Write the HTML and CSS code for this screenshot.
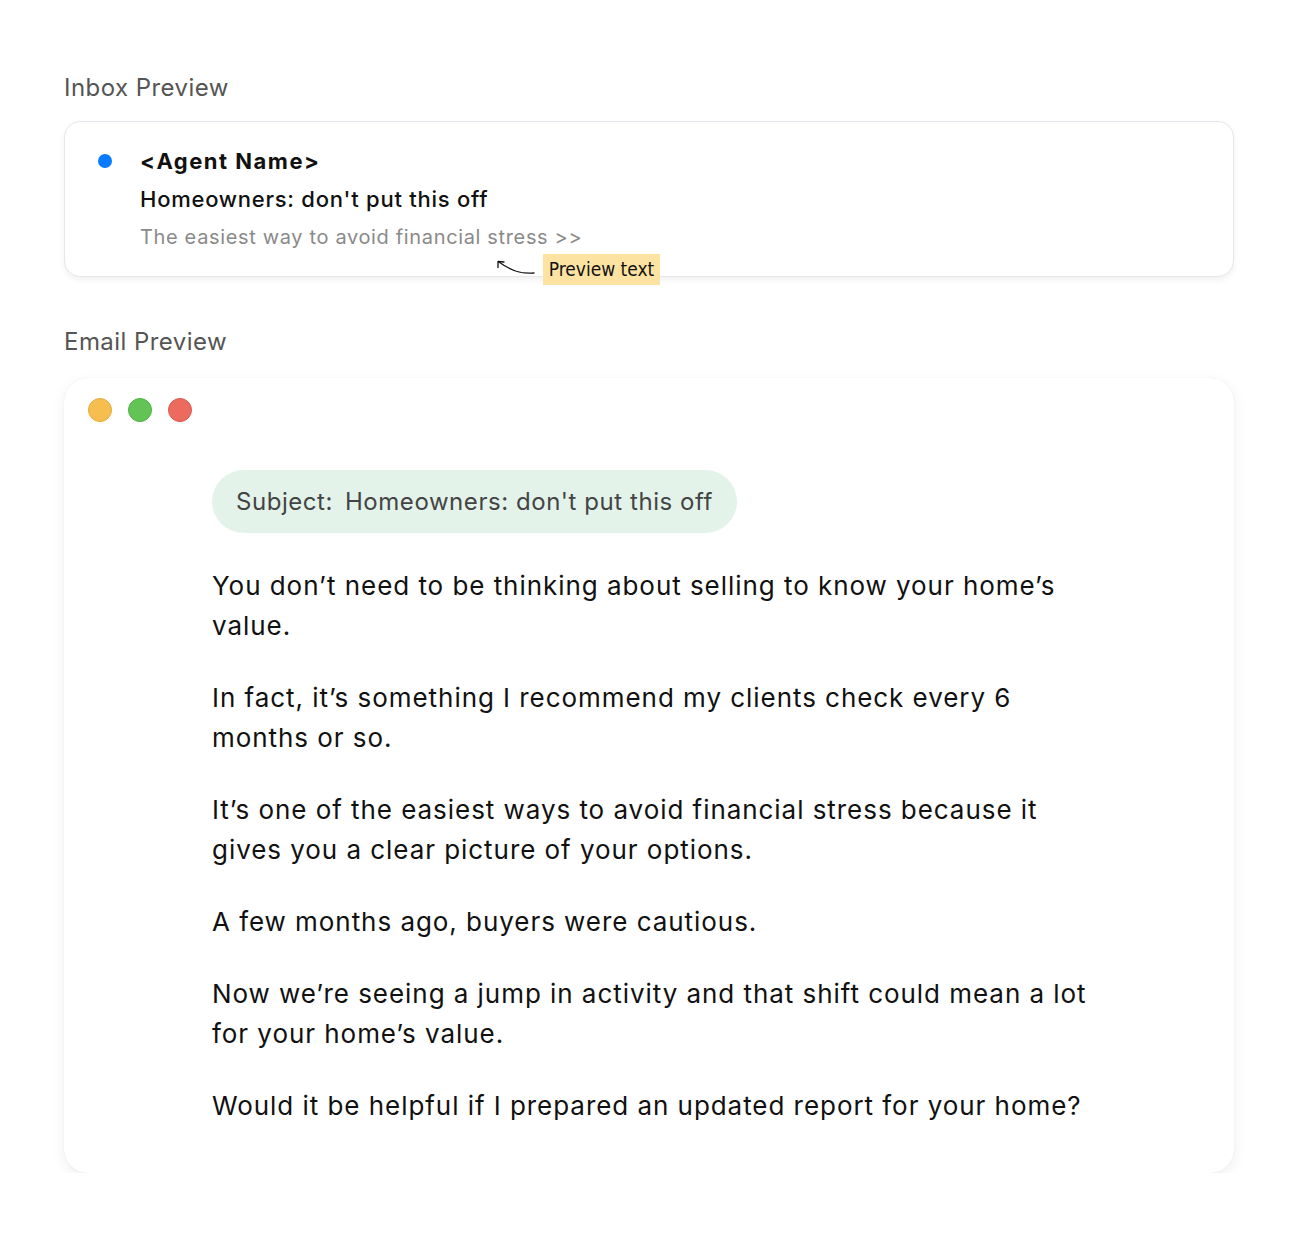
FILE: index.html
```html
<!DOCTYPE html>
<html>
<head>
<meta charset="utf-8">
<link rel="stylesheet" href="styles.css">
</head>
<body>
<div class="page">
  <div class="label">Inbox Preview</div>
  <div class="inbox-card">
    <div class="unread-dot"></div>
    <div class="inbox-text">
      <div class="sender">&lt;Agent Name&gt;</div>
      <div class="subject-line">Homeowners: don't put this off</div>
      <div class="preview-line">The easiest way to avoid financial stress &gt;&gt;</div>
    </div>
    <svg class="annot-arrow" width="50" height="22" viewBox="0 0 50 22">
      <path d="M47 17 C34 18 24 15 12 6" fill="none" stroke="#111" stroke-width="1.3" stroke-linecap="round"/>
      <path d="M11 11.5 L11 5.5 L17 6" fill="none" stroke="#111" stroke-width="1.3" stroke-linecap="round" stroke-linejoin="round"/>
    </svg>
    <div class="annot-tag">Preview text</div>
  </div>

  <div class="label label-email">Email Preview</div>
  <div class="email-card">
    <div class="window-dots">
      <span class="wdot yellow"></span>
      <span class="wdot green"></span>
      <span class="wdot red"></span>
    </div>
    <div class="email-body">
      <div class="subject-pill"><span class="subject-key">Subject:</span>Homeowners: don't put this off</div>
      <p>You don’t need to be thinking about selling to know your home’s value.</p>
      <p>In fact, it’s something I recommend my clients check every 6 months or so.</p>
      <p>It’s one of the easiest ways to avoid financial stress because it gives you a clear picture of your options.</p>
      <p>A few months ago, buyers were cautious.</p>
      <p>Now we’re seeing a jump in activity and that shift could mean a lot for your home’s value.</p>
      <p>Would it be helpful if I prepared an updated report for your home?</p>
    </div>
  </div>
</div>
</body>
</html>
```

FILE: styles.css
```css
* { box-sizing: border-box; }
body {
  margin: 0;
  background: #ffffff;
  font-family: Inter, "Noto Sans", sans-serif;
  color: #111;
}
.page {
  padding: 72px 64px 0 64px;
}
.label {
  font-size: 24px;
  line-height: 32px;
  letter-spacing: 0.45px;
  color: #555;
  margin-bottom: 17px;
}
.label-email {
  margin-top: 49px;
  margin-bottom: 20px;
}
.inbox-card {
  position: relative;
  display: flex;
  align-items: flex-start;
  gap: 28px;
  height: 156px;
  padding: 20px 0 20px 33px;
  border: 1px solid #e6e6ec;
  border-radius: 16px;
  background: #fff;
  box-shadow: 0 3px 6px rgba(0,0,0,0.06);
}
.unread-dot {
  width: 14px;
  height: 14px;
  border-radius: 50%;
  background: #0a7aff;
  margin-top: 12px;
  flex: none;
}
.inbox-text {
  display: flex;
  flex-direction: column;
}
.sender {
  font-size: 22px;
  line-height: 38px;
  font-weight: 650;
  letter-spacing: 1.5px;
  color: #111;
}
.subject-line {
  font-size: 22px;
  line-height: 38px;
  font-weight: 500;
  letter-spacing: 0.75px;
  color: #111;
}
.preview-line {
  font-size: 20px;
  line-height: 38px;
  letter-spacing: 0.65px;
  color: #8a8a8a;
}
.annot-arrow {
  position: absolute;
  left: 422px;
  top: 134px;
}
.annot-tag {
  position: absolute;
  left: 478px;
  top: 132px;
  width: 117px;
  height: 31px;
  background: #fde3a1;
  font-family: "Liberation Sans Narrow", "DejaVu Sans Condensed", sans-serif;
  font-size: 19px;
  line-height: 31px;
  text-align: center;
  color: #111;
}
.email-card {
  height: 795px;
  padding: 20px 24px 47px 24px;
  border-radius: 24px;
  background: #fff;
  box-shadow: 0 0 1px rgba(0,0,0,0.10), 0 4px 14px rgba(0,0,0,0.07);
}
.window-dots {
  display: flex;
  gap: 16px;
}
.wdot {
  width: 24px;
  height: 24px;
  border-radius: 50%;
}
.wdot.yellow { background: #f5be4f; border: 1px solid #e4ab3d; }
.wdot.green { background: #61c454; border: 1px solid #52b045; }
.wdot.red { background: #ed6a5e; border: 1px solid #d85a4f; }
.email-body {
  margin-left: 124px;
  margin-top: 48px;
  max-width: 885px;
}
.subject-pill {
  display: inline-flex;
  align-items: center;
  height: 63px;
  padding: 0 24px;
  border-radius: 32px;
  background: #e3f3ea;
  font-size: 24px;
  letter-spacing: 0.55px;
  color: #444;
  margin-bottom: 1px;
}
.subject-key {
  margin-right: 12px;
}
.email-body p {
  margin: 32px 0 0 0;
  font-size: 26px;
  line-height: 40px;
  letter-spacing: 0.95px;
  color: #111;
}
```
